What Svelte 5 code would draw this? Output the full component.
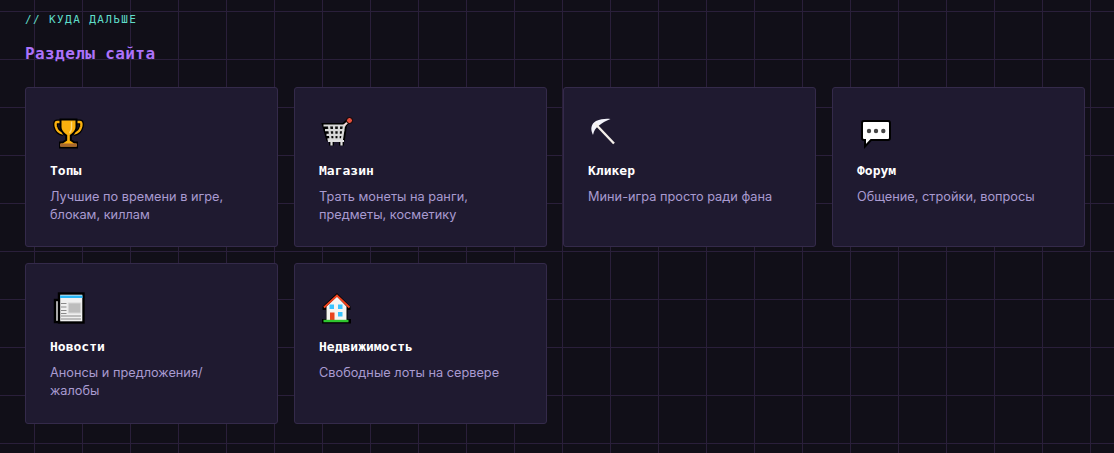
<script lang="ts">
	const sections = [
		{ icon: 'trophy', title: 'Топы', text: 'Лучшие по времени в игре, блокам, киллам' },
		{ icon: 'cart', title: 'Магазин', text: 'Трать монеты на ранги, предметы, косметику' },
		{ icon: 'pick', title: 'Кликер', text: 'Мини-игра просто ради фана' },
		{ icon: 'chat', title: 'Форум', text: 'Общение, стройки, вопросы' },
		{ icon: 'news', title: 'Новости', text: 'Анонсы и предложения/ жалобы' },
		{ icon: 'house', title: 'Недвижимость', text: 'Свободные лоты на сервере' }
	];
</script>

<main class="page">
	<p class="eyebrow">// КУДА ДАЛЬШЕ</p>
	<h2 class="heading">Разделы сайта</h2>

	<div class="grid">
		{#each sections as s}
			<a class="card" href="#{s.icon}">
				<svg class="icon" viewBox="0 0 36 36" width="36" height="36" aria-hidden="true">
					{#if s.icon === 'trophy'}
						<path d="M12 8H7C5.500 8 5.300 10 5.800 12.500C6.800 16.500 9.500 19 13 19.500M25 8H30C31.500 8 31.700 10 31.200 12.500C30.200 16.500 27.500 19 24 19.500" fill="none" stroke="#000" stroke-width="5" />
						<path d="M12 8H7C5.500 8 5.300 10 5.800 12.500C6.800 16.500 9.500 19 13 19.500M25 8H30C31.500 8 31.700 10 31.200 12.500C30.200 16.500 27.500 19 24 19.500" fill="none" stroke="#fbb10e" stroke-width="2.400" />
						<path d="M10.500 5.500H26.500V13C26.500 18 22.500 20 20.800 21.500V26L24.500 28.500H27V33.500H10V28.500H12.500L16.200 26V21.500C14.500 20 10.500 18 10.500 13Z" fill="#fbb10e" stroke="#000" stroke-width="2" />
						<path d="M21.500 7.500V14C21.500 17 20.500 18 19.500 19" fill="none" stroke="#ffd97a" stroke-width="1.400" />
						<rect x="10" y="29.500" width="17" height="3.200" fill="#a8692e" />
					{:else if s.icon === 'cart'}
						<path d="M25 11L30 6.500" fill="none" stroke="#000" stroke-width="5" />
						<path d="M5 11H26L24 25H9Z" fill="#111" stroke="#000" stroke-width="4" />
						<path d="M4.500 11.500H26.500M6 16.200H25.500M7.500 20.800H24.500M8.500 25.300H24M10 11.500L11.500 25M15 11.500L15.500 25M20 11.500L19.500 25M25 11.500L23 25" fill="none" stroke="#d8d8d8" stroke-width="2.200" />
						<path d="M25 11.500L29.500 7.500" fill="none" stroke="#eed8d8" stroke-width="2.200" />
						<circle cx="30.500" cy="6.500" r="3" fill="#e8503e" stroke="#000" stroke-width="1" />
						<path d="M12.500 26V31.500M22.500 26V31.500" stroke="#000" stroke-width="5" fill="none" />
						<path d="M12.500 26V31.500M22.500 26V31.500M9 27H25" stroke="#e0e0e0" stroke-width="2.200" fill="none" />
					{:else if s.icon === 'pick'}
						<path d="M5 21C2 15 3 10 8 7C13 5 18 4.300 22.500 5C17.500 6.800 14 9 11 11.500C7.500 14 6 16.500 5 21Z" fill="#f4f4fb" />
						<path d="M7 9.500L26 29.500" stroke="#f4efe9" stroke-width="2.400" fill="none" />
					{:else if s.icon === 'chat'}
						<path d="M7 7H31C32.500 7 33 7.500 33 9V24C33 25.500 32.500 26 31 26H14L8 32.500V26H7C5.500 26 5 25.500 5 24V9C5 7.500 5.500 7 7 7Z" fill="#fff" stroke="#000" stroke-width="2" />
						<circle cx="12" cy="17" r="2.200" fill="#444" />
						<circle cx="19" cy="17" r="2.200" fill="#444" />
						<circle cx="26.300" cy="17" r="2.200" fill="#444" />
					{:else if s.icon === 'news'}
						<rect x="5" y="10" width="10" height="22" fill="#d4d4d4" stroke="#000" stroke-width="2.400" />
						<rect x="9" y="3.500" width="24.500" height="29" fill="#f0f0f0" stroke="#000" stroke-width="2.400" />
						<rect x="10" y="5.500" width="22.500" height="2.500" fill="#29b6f6" />
						<rect x="18.300" y="13" width="12.500" height="10" fill="#bdbdbd" stroke="#d6d6d6" />
						<path d="M11 13.500H16.500M11 17H16.500M11 20.500H16.500M11 23.500H16.500M11 26H31M11 29H31" stroke="#8a8a8a" stroke-width="1.200" fill="none" />
					{:else if s.icon === 'house'}
						<path d="M18 3L31.500 16.500V20H28.500V29H32V33.500H3V29H7V20H3.500V16.500Z" fill="#000" />
						<path d="M18 6.500L27.500 16.500V30H7.500V16.500Z" fill="#f6f4f1" />
						<path d="M5 17.500L18 5.500L30.500 17.500" fill="none" stroke="#f0431f" stroke-width="2" />
						<rect x="10.500" y="14.500" width="4.500" height="4.500" fill="#37c3ff" />
						<rect x="19" y="14.500" width="4.500" height="4.500" fill="#37c3ff" />
						<rect x="19" y="22" width="4.500" height="4.500" fill="#37c3ff" />
						<rect x="11" y="22.500" width="4.500" height="8" fill="#e8431f" />
						<rect x="4.500" y="29.800" width="25" height="2.400" fill="#2fc62f" />
					{/if}
				</svg>
				<h3 class="title">{s.title}</h3>
				<p class="text">{s.text}</p>
			</a>
		{/each}
	</div>
</main>

<style>
	:global(body) {
		background-color: #110f18;
		background-image:
			linear-gradient(#2a1f3a 1px, transparent 1px),
			linear-gradient(90deg, #2a1f3a 1px, transparent 1px);
		background-size: 48px 48px;
		background-position: 34px 11px;
	}

	.page {
		box-sizing: border-box;
		height: 453px;
		overflow: hidden;
		padding: 13px 29px 0 25px;
	}

	.eyebrow {
		margin: 0;
		font: 11px/13px "DejaVu Sans Mono", monospace;
		letter-spacing: 1.4px;
		color: #5fdcc8;
	}

	.heading {
		margin: 18px 0 23px;
		font: 700 16px/20px "DejaVu Sans Mono", monospace;
		letter-spacing: 0.4px;
		color: #ac72fa;
	}

	.grid {
		display: grid;
		grid-template-columns: repeat(4, 1fr);
		gap: 16px;
	}

	.card {
		display: block;
		box-sizing: border-box;
		min-height: 160.3px;
		padding: 26px 24px 20px;
		background: #1f1a30;
		border: 1px solid #342a4a;
		border-radius: 3px;
		text-decoration: none;
	}

	.icon {
		display: block;
	}

	.title {
		margin: 13px 0 9px;
		font: 700 13px/16px "DejaVu Sans Mono", monospace;
		color: #fff;
	}

	.text {
		margin: 0;
		font: 12.75px/1.41 Inter, sans-serif;
		color: #a99bd0;
	}
</style>
